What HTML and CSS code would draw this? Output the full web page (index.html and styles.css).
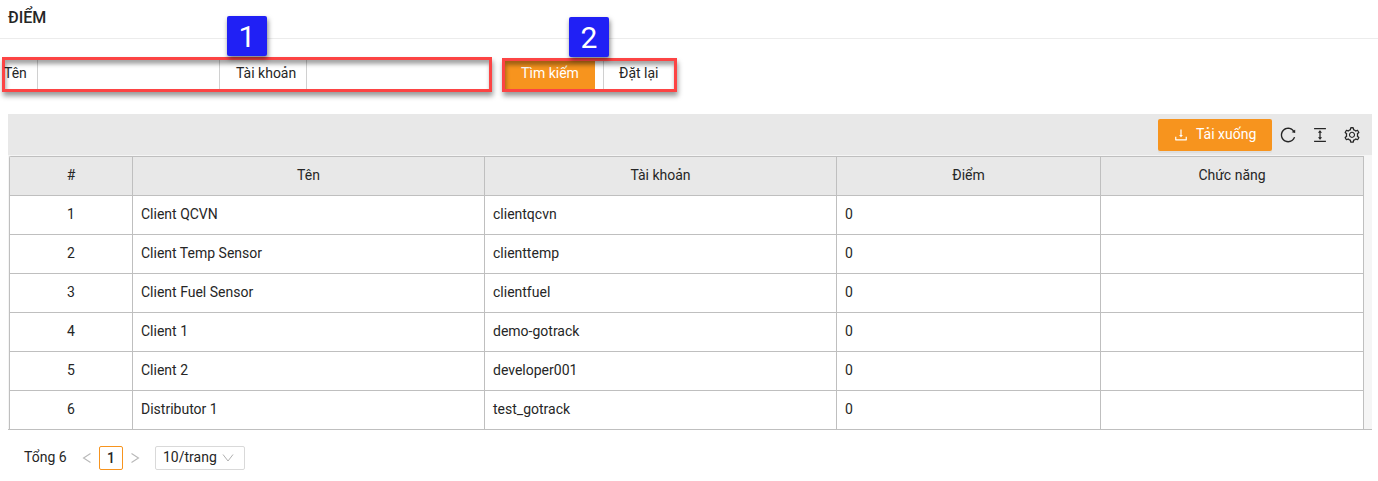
FILE: index.html
```html
<!DOCTYPE html>
<html lang="vi">
<head>
<meta charset="utf-8">
<title>Điểm</title>
<link rel="stylesheet" href="styles.css">
</head>
<body>
<header class="page-header"><h1 class="page-title">ĐIỂM</h1></header>

<form class="search">
  <div class="group fields">
    <label class="label label-name">Tên</label><span class="input input-name"></span>
    <label class="label label-account">Tài khoản</label><span class="input input-account"></span>
    <span class="badge badge-one">1</span>
  </div>
  <div class="group actions">
    <span class="btn-search">Tìm kiếm</span>
    <span class="btn-reset">Đặt lại</span>
    <span class="badge badge-two">2</span>
  </div>
</form>

<main class="panel">
  <div class="toolbar">
    <span class="btn-download">
      <svg class="icon-small" viewBox="0 0 1024 1024"><path d="M505.7 661a8 8 0 0012.6 0l112-141.7c4.1-5.2.4-12.9-6.3-12.9h-74.1V168c0-4.4-3.6-8-8-8h-60c-4.4 0-8 3.6-8 8v338.3H400c-6.7 0-10.4 7.7-6.3 12.9l112 141.8zM878 626h-60c-4.4 0-8 3.6-8 8v154H214V634c0-4.4-3.6-8-8-8h-60c-4.4 0-8 3.6-8 8v198c0 17.7 14.3 32 32 32h684c17.7 0 32-14.3 32-32V634c0-4.4-3.6-8-8-8z"/></svg>
      <span>Tải xuống</span>
    </span>
    <svg class="icon" viewBox="0 0 1024 1024"><path d="M909.1 209.3l-56.4 44.1C775.8 155.1 656.2 92 521.9 92 290 92 102.3 279.5 102 511.5 101.7 743.7 289.8 932 521.9 932c181.3 0 335.8-115 394.6-276.1 1.5-4.2-.7-8.9-4.9-10.3l-56.7-19.5a8 8 0 00-10.1 4.8c-1.8 5-3.8 10-5.9 14.9-17.3 41-42.1 77.8-73.7 109.4A344.77 344.77 0 01655.9 829c-42.3 17.9-87.4 27-133.8 27-46.5 0-91.5-9.1-133.8-27A341.5 341.5 0 01279 755.2a342.16 342.16 0 01-73.7-109.4c-17.9-42.4-27-87.4-27-133.9s9.1-91.5 27-133.9c17.3-41 42.1-77.8 73.7-109.4 31.6-31.6 68.4-56.4 109.3-73.8 42.3-17.9 87.4-27 133.8-27 46.5 0 91.5 9.1 133.8 27a341.5 341.5 0 01109.3 73.8c9.9 9.9 19.2 20.4 27.8 31.4l-60.2 47a8 8 0 003 14.1l175.6 43c5 1.2 9.9-2.6 9.9-7.7l.8-180.9c-.1-6.6-7.8-10.3-13-6.2z"/></svg>
    <svg class="icon" viewBox="0 0 1024 1024"><path d="M840 836H184c-4.400 0-8 3.600-8 8v60c0 4.400 3.600 8 8 8h656c4.400 0 8-3.600 8-8v-60c0-4.400-3.600-8-8-8zm0-724H184c-4.400 0-8 3.600-8 8v60c0 4.400 3.600 8 8 8h656c4.400 0 8-3.600 8-8v-60c0-4.400-3.600-8-8-8zM610.800 378c6 0 9.400-7 5.700-11.700L515.700 238.700a7.140 7.140 0 00-11.300 0L403.600 366.300a7.230 7.230 0 005.700 11.700H476v268h-62.800c-6 0-9.400 7-5.700 11.700l100.800 127.500c2.900 3.700 8.500 3.700 11.300 0l100.800-127.500c3.700-4.700.4-11.700-5.700-11.700H548V378h62.800z"/></svg>
    <svg class="icon" viewBox="0 0 1024 1024"><path fill-rule="evenodd" d="M924.8 625.7l-65.5-56c3.1-19 4.7-38.4 4.7-57.8s-1.6-38.8-4.7-57.8l65.5-56a32.03 32.03 0 009.3-35.2l-.9-2.6a443.74 443.74 0 00-79.7-137.9l-1.8-2.1a32.12 32.12 0 00-35.1-9.5l-81.3 28.9c-30-24.6-63.5-44-99.7-57.6l-15.7-85a32.05 32.05 0 00-25.8-25.7l-2.7-.5c-52.1-9.4-106.9-9.4-159 0l-2.7.5a32.05 32.05 0 00-25.8 25.7l-15.8 85.4a351.86 351.86 0 00-99 57.4l-81.9-29.1a32 32 0 00-35.1 9.5l-1.8 2.1a446.02 446.02 0 00-79.7 137.9l-.9 2.6c-4.5 12.5-.8 26.5 9.3 35.2l66.3 56.6c-3.1 18.8-4.6 38-4.6 57.1 0 19.2 1.5 38.4 4.6 57.1L99 625.5a32.03 32.03 0 00-9.3 35.2l.9 2.6c18.1 50.4 44.9 96.9 79.7 137.9l1.8 2.1a32.12 32.12 0 0035.1 9.5l81.9-29.1c29.8 24.5 63.1 43.9 99 57.4l15.8 85.4a32.05 32.05 0 0025.8 25.7l2.7.5a449.4 449.4 0 00159 0l2.7-.5a32.05 32.05 0 0025.8-25.7l15.7-85a350 350 0 0099.7-57.6l81.3 28.9a32 32 0 0035.1-9.5l1.8-2.1c34.8-41.1 61.6-87.5 79.7-137.9l.9-2.6c4.500-12.300.8-26.300-9.300-35zM788.3 465.9c2.5 15.100 3.800 30.600 3.800 46.100s-1.300 31-3.800 46.100l-6.600 40.100 74.700 63.900a370.030 370.030 0 01-42.600 73.600L721 702.800l-31.400 25.800c-23.900 19.600-50.500 35-79.300 45.800l-38.100 14.300-17.900 97a377.500 377.500 0 01-85 0l-17.900-97.200-37.800-14.500c-28.500-10.800-55-26.200-78.700-45.700l-31.400-25.900-93.400 33.200c-17-22.900-31.200-47.600-42.600-73.600l75.500-64.500-6.500-40c-2.400-14.900-3.700-30.300-3.700-45.500 0-15.300 1.200-30.600 3.700-45.500l6.500-40-75.500-64.500c11.300-26.100 25.600-50.700 42.600-73.600l93.400 33.200 31.400-25.900c23.700-19.500 50.200-34.900 78.700-45.700l37.900-14.300 17.900-97.200c28.100-3.200 56.800-3.200 85 0l17.900 97 38.100 14.300c28.700 10.800 55.400 26.200 79.300 45.800l31.400 25.800 92.800-32.900c17 22.900 31.200 47.600 42.600 73.600L781.800 426l6.500 39.900zM512 326c-97.200 0-176 78.800-176 176s78.800 176 176 176 176-78.800 176-176-78.800-176-176-176zm79.200 255.200A111.600 111.600 0 01512 614c-29.900 0-58-11.700-79.200-32.800A111.600 111.600 0 01400 502c0-29.900 11.700-58 32.800-79.200C454 401.600 482.100 390 512 390c29.900 0 58 11.600 79.200 32.800A111.600 111.600 0 01624 502c0 29.900-11.700 58-32.800 79.200z"/></svg>
  </div>
  <div class="table-wrap">
    <table class="table">
      <colgroup><col class="col-index"><col class="col-name"><col class="col-account"><col class="col-points"><col class="col-actions"></colgroup>
      <thead><tr><th>#</th><th>Tên</th><th>Tài khoản</th><th>Điểm</th><th>Chức năng</th></tr></thead>
      <tbody>
        <tr><td>1</td><td>Client QCVN</td><td>clientqcvn</td><td>0</td><td></td></tr>
        <tr><td>2</td><td>Client Temp Sensor</td><td>clienttemp</td><td>0</td><td></td></tr>
        <tr><td>3</td><td>Client Fuel Sensor</td><td>clientfuel</td><td>0</td><td></td></tr>
        <tr><td>4</td><td>Client 1</td><td>demo-gotrack</td><td>0</td><td></td></tr>
        <tr><td>5</td><td>Client 2</td><td>developer001</td><td>0</td><td></td></tr>
        <tr><td>6</td><td>Distributor 1</td><td>test_gotrack</td><td>0</td><td></td></tr>
      </tbody>
    </table>
  </div>
</main>

<footer class="pagination">
  <span class="total">Tổng 6</span>
  <svg class="arrow" viewBox="0 0 24 24"><path d="M15.500 7.500 8.500 12l7 4.500"/></svg>
  <span class="page">1</span>
  <svg class="arrow" viewBox="0 0 24 24"><path d="M8.500 7.500l7 4.500-7 4.500"/></svg>
  <span class="page-size"><span>10/trang</span><svg class="chevron" viewBox="0 0 12 12"><path d="M1 2.500 6 9l5-6.500"/></svg></span>
</footer>
</body>
</html>
```
FILE: styles.css
```css
* { box-sizing: border-box; }
body {
  margin: 0;
  height: 481px;
  overflow: hidden;
  background: #fff;
  color: #262626;
  font: 14px/22px Roboto, "Noto Sans", sans-serif;
}
.page-header {
  height: 39px;
  padding: 7px 8px 0;
  border-bottom: 1px solid #ececec;
}
.page-title {
  margin: 0;
  font-size: 16px;
  font-weight: 500;
  line-height: 22px;
}

.search {
  display: flex;
  align-items: flex-end;
  gap: 10px;
  height: 53px;
  padding-left: 2px;
}
.group {
  position: relative;
  display: flex;
  border: 3px solid #fc4444;
  box-shadow: 1px 4px 5px rgba(0, 0, 0, 0.4);
  line-height: 26px;
}
/* shade cast by the frame over its contents */
.group::after {
  content: "";
  position: absolute;
  inset: 0;
  box-shadow: inset 1px 4px 4px rgba(0, 0, 0, 0.36);
}
.fields { width: 490px; height: 35px; }
.actions { width: 175px; height: 34px; line-height: 24px; }
.label-name { width: 32px; margin-left: -1px; }
.label-account { width: 87px; padding-left: 16px; border-left: 1px solid #d0d0d0; }
.input-name { width: 183px; border-left: 1px solid #d0d0d0; margin-left: 1px; }
.input-name + .label { margin-left: -1px; }
.input-account { flex: 1; border-left: 1px solid #d0d0d0; }
.btn-search {
  width: 90px;
  background: #f7941e;
  color: #fff;
  text-align: center;
}
.btn-reset {
  flex: 1;
  margin-left: 8px;
  padding-left: 15px;
  border-left: 1px solid #d0d0d0;
}
.badge {
  position: absolute;
  z-index: 1;
  width: 40px;
  height: 40px;
  border-radius: 2px;
  background: #2020f5;
  box-shadow: 1px 3px 5px rgba(0, 0, 0, 0.5);
  color: #fff;
  font: 30px/42px Roboto, sans-serif;
  text-align: center;
}
.badge-one { left: 222px; top: -44px; }
.badge-two { left: 64px; top: -44px; }

.panel { margin: 22px 6px 0 8px; }
.toolbar {
  display: flex;
  align-items: center;
  justify-content: flex-end;
  gap: 14px;
  height: 41px;
  padding: 1px 11px 0 0;
  background: #e8e8e8;
}
.btn-download {
  display: flex;
  align-items: center;
  gap: 7px;
  width: 114px;
  height: 32px;
  margin-right: -7px;
  padding: 0 15px;
  border-radius: 2px;
  background: #f7941e;
  box-shadow: 0 2px 0 rgba(0, 0, 0, 0.045);
  color: #fff;
  white-space: nowrap;
}
.btn-download span { position: relative; top: -1px; }
.icon-small { flex: none; width: 16px; height: 16px; fill: #fff; }
.icon { width: 18px; height: 18px; fill: #262626; }

.table-wrap {
  height: 275px;
  padding: 1px 0 0 1px;
  background: #f5f5f5;
  border-bottom: 1px solid #bfbfbf;
}
.table {
  width: 1355px;
  table-layout: fixed;
  border-collapse: separate;
  border-spacing: 0;
  border: 1px solid #bfbfbf;
  border-width: 1px 0 0 1px;
  border-radius: 2px 0 0 0;
}
.table th, .table td {
  height: 39px;
  padding: 0 8px 3px;
  border: 1px solid #bfbfbf;
  border-width: 0 1px 1px 0;
  background: #fff;
  font-weight: 400;
  text-align: left;
}
.table th { background: #e8e8e8; text-align: center; }
.table td:first-child { text-align: center; }
.col-index { width: 123px; }
.col-name, .col-account { width: 352px; }
.col-points { width: 264px; }
.col-actions { width: 263px; }

.pagination {
  display: flex;
  align-items: center;
  height: 24px;
  margin-top: 16px;
  padding-left: 24px;
}
.total { width: 51px; position: relative; top: -1px; }
.arrow { width: 24px; height: 24px; fill: none; stroke: #b8b8b8; stroke-width: 1.1; }
.page {
  width: 24px;
  height: 24px;
  border: 1px solid #f7941e;
  border-radius: 2px;
  font-weight: 500;
  text-align: center;
}
.page-size {
  display: flex;
  align-items: center;
  justify-content: space-between;
  width: 90px;
  height: 24px;
  margin-left: 8px;
  padding: 0 10px 0 7px;
  border: 1px solid #d9d9d9;
  border-radius: 2px;
}
.page-size span { position: relative; top: -1px; }
.chevron { width: 12px; height: 12px; fill: none; stroke: #b0b0b0; }
```
